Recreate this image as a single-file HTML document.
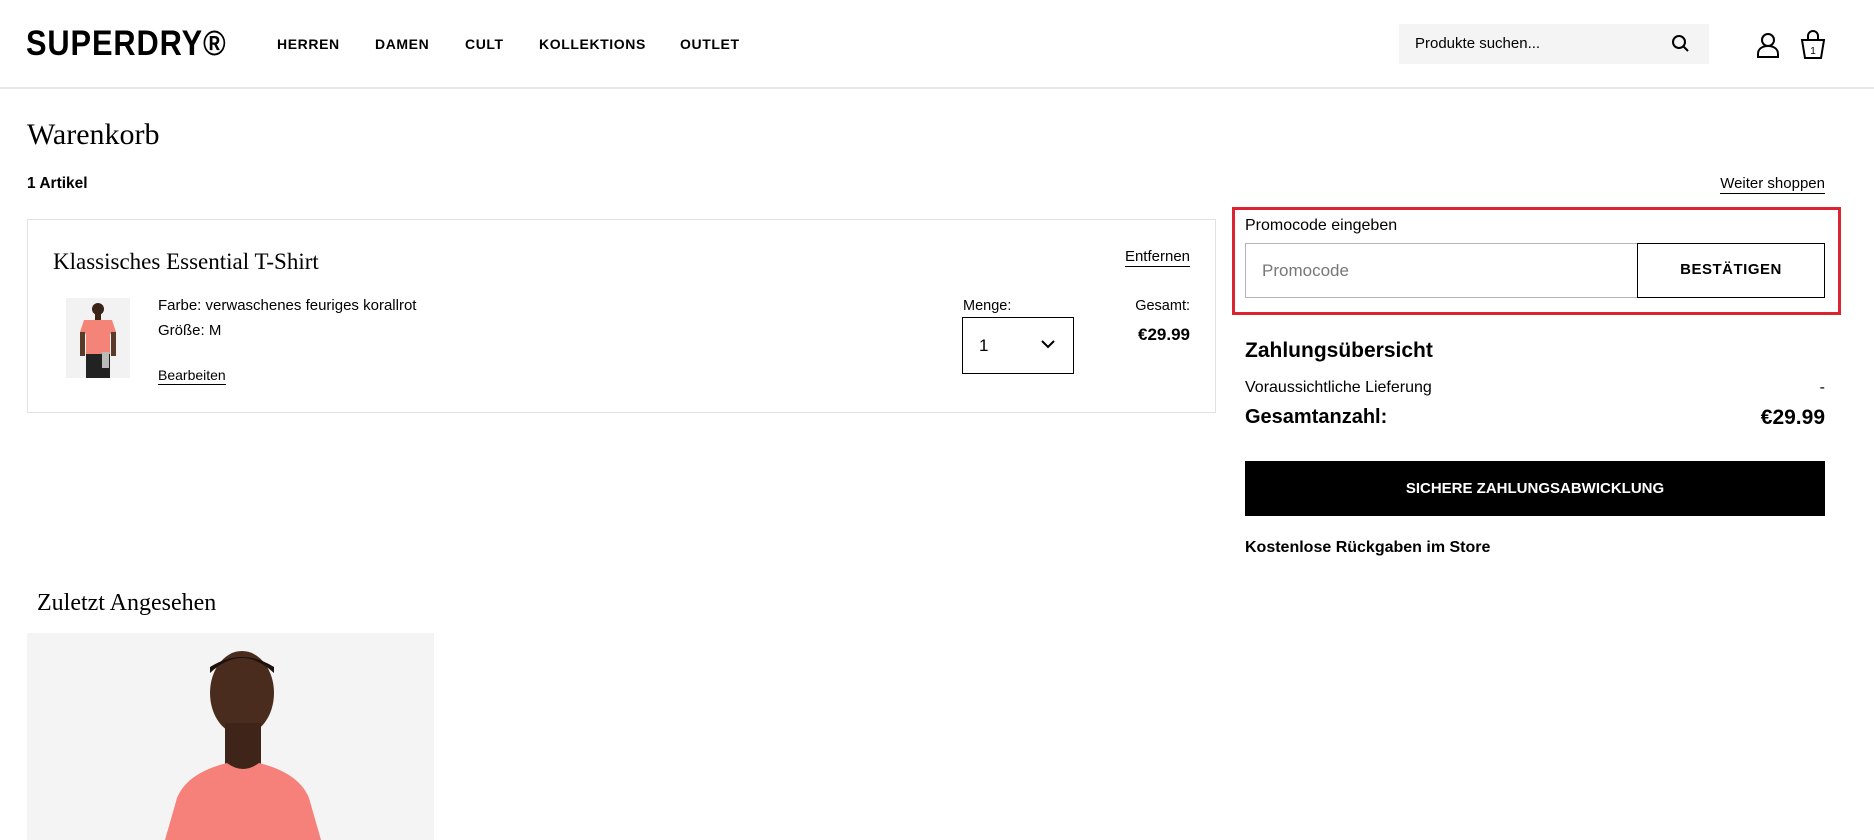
<!DOCTYPE html>
<html><head><meta charset="utf-8"><style>
*{margin:0;padding:0;box-sizing:border-box}
body{width:1874px;height:840px;overflow:hidden;background:#fff;font-family:"Liberation Sans",Arial,sans-serif;color:#000;position:relative}
.a{position:absolute;white-space:nowrap}
.serif{font-family:"Liberation Serif",serif;font-weight:normal}
.nav{font-weight:bold;font-size:14px;letter-spacing:0.6px;top:36px}
u{text-decoration:none;border-bottom:1.5px solid #000;padding-bottom:1px}
</style></head><body>
<div class="a" style="left:0;top:87px;width:1874px;height:2px;background:#e8e8e8"></div>
<div class="a" style="left:26px;top:24px;font-size:35px;font-weight:bold;transform:scaleX(0.88);transform-origin:left;letter-spacing:1px">SUPERDRY®</div>
<div class="a nav" style="left:277px">HERREN</div>
<div class="a nav" style="left:375px">DAMEN</div>
<div class="a nav" style="left:465px">CULT</div>
<div class="a nav" style="left:539px">KOLLEKTIONS</div>
<div class="a nav" style="left:680px">OUTLET</div>
<div class="a" style="left:1399px;top:24px;width:310px;height:40px;background:#f4f4f4"></div>
<div class="a" style="left:1415px;top:35px;font-size:15px">Produkte suchen...</div>
<svg class="a" style="left:1671px;top:34px" width="20" height="20" viewBox="0 0 20 20"><circle cx="8" cy="8" r="6" fill="none" stroke="#000" stroke-width="2"/><path d="M12.5 12.5L17 17" stroke="#000" stroke-width="2"/></svg>
<svg class="a" style="left:1755px;top:31px" width="26" height="28" viewBox="0 0 26 28"><circle cx="13" cy="9" r="6" fill="none" stroke="#000" stroke-width="2"/><path d="M3 26v-3c0-5 4-8 10-8s10 3 10 8v3z" fill="none" stroke="#000" stroke-width="2"/></svg>
<svg class="a" style="left:1800px;top:30px" width="26" height="30" viewBox="0 0 26 30"><path d="M8 10V6a5 5 0 0 1 10 0v4" fill="none" stroke="#000" stroke-width="2"/><path d="M2 10h22l-3 18H5z" fill="none" stroke="#000" stroke-width="2"/><text x="13" y="24" font-size="10" text-anchor="middle" font-family="Liberation Sans">1</text></svg>

<div class="a serif" style="left:27px;top:118px;font-size:30px">Warenkorb</div>
<div class="a" style="left:27px;top:175px;font-size:15.5px;font-weight:bold">1 Artikel</div>
<div class="a" style="right:49px;top:175px;font-size:15px"><u>Weiter shoppen</u></div>

<div class="a" style="left:27px;top:219px;width:1189px;height:194px;border:1px solid #e2e2e2"></div>
<div class="a serif" style="left:53px;top:249px;font-size:23px">Klassisches Essential T-Shirt</div>
<div class="a" style="right:684px;top:248px;font-size:15px"><u>Entfernen</u></div>
<svg class="a" style="left:66px;top:298px" width="64" height="80" viewBox="0 0 64 80"><rect width="64" height="80" fill="#f2f2f2"/><circle cx="32" cy="11" r="6" fill="#3a2418"/><rect x="29" y="16" width="6" height="6" fill="#3a2418"/><path d="M18 22h28l4 12-6 2v20H20V36l-6-2z" fill="#f48477"/><rect x="14" y="34" width="5" height="24" fill="#5a3a28"/><rect x="45" y="34" width="5" height="24" fill="#5a3a28"/><rect x="20" y="56" width="24" height="24" fill="#222"/><rect x="36" y="54" width="7" height="16" fill="#bbb"/></svg>
<div class="a" style="left:158px;top:297px;font-size:15px">Farbe: verwaschenes feuriges korallrot</div>
<div class="a" style="left:158px;top:322px;font-size:15px">Größe: M</div>
<div class="a" style="left:158px;top:367px;font-size:14px"><u>Bearbeiten</u></div>
<div class="a" style="left:963px;top:298px;font-size:14.5px">Menge:</div>
<div class="a" style="left:962px;top:317px;width:112px;height:57px;border:1.5px solid #000"></div>
<div class="a" style="left:979px;top:336px;font-size:17px">1</div>
<svg class="a" style="left:1040px;top:338px" width="16" height="12" viewBox="0 0 16 12"><path d="M2 3l6 6 6-6" fill="none" stroke="#000" stroke-width="2"/></svg>
<div class="a" style="right:684px;top:298px;font-size:14.5px">Gesamt:</div>
<div class="a" style="right:684px;top:325px;font-size:17px;font-weight:bold">€29.99</div>

<div class="a" style="left:1232px;top:207px;width:609px;height:108px;border:3.5px solid #dc2430"></div>
<div class="a" style="left:1245px;top:217px;font-size:16px">Promocode eingeben</div>
<div class="a" style="left:1245px;top:243px;width:393px;height:55px;border:1px solid #b5b5b5"></div>
<div class="a" style="left:1262px;top:261px;font-size:17px;color:#777">Promocode</div>
<div class="a" style="left:1637px;top:243px;width:188px;height:55px;border:1.5px solid #000;font-weight:bold;font-size:15px;text-align:center;line-height:52px;letter-spacing:.5px">BESTÄTIGEN</div>

<div class="a" style="left:1245px;top:339px;font-size:21px;font-weight:bold">Zahlungsübersicht</div>
<div class="a" style="left:1245px;top:379px;font-size:16px">Voraussichtliche Lieferung</div>
<div class="a" style="right:49px;top:379px;font-size:16px">-</div>
<div class="a" style="left:1245px;top:406px;font-size:20px;font-weight:bold">Gesamtanzahl:</div>
<div class="a" style="right:49px;top:406px;font-size:21px;font-weight:bold">€29.99</div>
<div class="a" style="left:1245px;top:461px;width:580px;height:55px;background:#000;color:#fff;font-weight:bold;font-size:15px;text-align:center;line-height:55px">SICHERE ZAHLUNGSABWICKLUNG</div>
<div class="a" style="left:1245px;top:539px;font-size:16px;font-weight:bold">Kostenlose Rückgaben im Store</div>

<div class="a serif" style="left:37px;top:590px;font-size:24px">Zuletzt Angesehen</div>
<svg class="a" style="left:27px;top:633px" width="407" height="207" viewBox="0 0 407 207"><rect width="407" height="207" fill="#f4f4f4"/><ellipse cx="215" cy="60" rx="32" ry="42" fill="#4a2c1e"/><path d="M183 40q32-30 64 0v-6q-32-20-64 0z" fill="#1c120c"/><rect x="198" y="90" width="36" height="50" fill="#3f2519"/><path d="M150 165q10-25 50-35q16 12 32 0q40 10 50 35l12 42H138z" fill="#f5817a"/></svg>
</body></html>
